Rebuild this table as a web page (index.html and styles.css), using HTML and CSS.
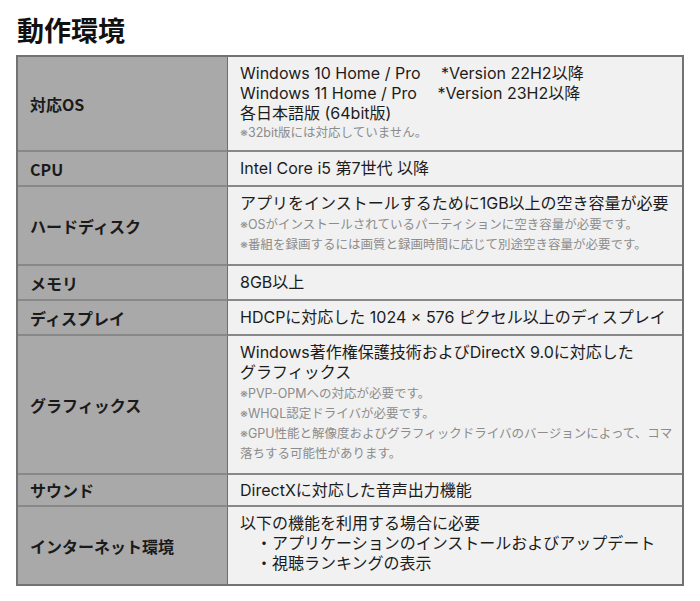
FILE: index.html
```html
<!DOCTYPE html>
<html lang="ja">
<head>
<meta charset="utf-8">
<title>動作環境</title>
<link rel="stylesheet" href="styles.css">
</head>
<body>
<h1 class="title">動作環境</h1>
<table class="spec">
  <tr>
    <th>対応OS</th>
    <td>
      <div>Windows 10 Home / Pro&ensp;&ensp; *Version 22H2以降</div>
      <div>Windows 11 Home / Pro&ensp;&ensp; *Version 23H2以降</div>
      <div>各日本語版 (64bit版)</div>
      <div class="note">※32bit版には対応していません。</div>
    </td>
  </tr>
  <tr>
    <th>CPU</th>
    <td>Intel Core i5 第7世代 以降</td>
  </tr>
  <tr>
    <th>ハードディスク</th>
    <td class="roomy">
      <div>アプリをインストールするために1GB以上の空き容量が必要</div>
      <div class="notes">
        <div class="note">※OSがインストールされているパーティションに空き容量が必要です。</div>
        <div class="note">※番組を録画するには画質と録画時間に応じて別途空き容量が必要です。</div>
      </div>
    </td>
  </tr>
  <tr>
    <th>メモリ</th>
    <td>8GB以上</td>
  </tr>
  <tr>
    <th>ディスプレイ</th>
    <td>HDCPに対応した 1024 × 576 ピクセル以上のディスプレイ</td>
  </tr>
  <tr>
    <th>グラフィックス</th>
    <td class="roomy">
      <div>Windows著作権保護技術およびDirectX 9.0に対応した<br>グラフィックス</div>
      <div class="notes">
        <div class="note">※PVP-OPMへの対応が必要です。</div>
        <div class="note">※WHQL認定ドライバが必要です。</div>
        <div class="note">※GPU性能と解像度およびグラフィックドライバのバージョンによって、コマ落ちする可能性があります。</div>
      </div>
    </td>
  </tr>
  <tr>
    <th>サウンド</th>
    <td class="tight">DirectXに対応した音声出力機能</td>
  </tr>
  <tr class="last">
    <th>インターネット環境</th>
    <td>
      <div>以下の機能を利用する場合に必要</div>
      <ul class="list">
        <li>・アプリケーションのインストールおよびアップデート</li>
        <li>・視聴ランキングの表示</li>
      </ul>
    </td>
  </tr>
</table>
</body>
</html>
```
FILE: styles.css
```css
html, body {
  margin: 0;
  padding: 0;
  background: #ffffff;
}

body {
  padding: 13px 16px 0;
  font-family: "Inter", "Noto Sans CJK JP", sans-serif;
  color: #1c1c1c;
}

.title {
  margin: 0 0 8px 1px;
  font-size: 27px;
  line-height: 34px;
  font-weight: 700;
  color: #111111;
  font-family: "Noto Sans CJK JP", sans-serif;
}

.spec {
  width: 668px;
  border-collapse: separate;
  border-spacing: 0;
  border: 2px solid #727272;
}

.spec th,
.spec td {
  border-bottom: 2px solid #888888;
  vertical-align: middle;
  text-align: left;
  font-size: 16px;
  line-height: 20px;
}

.spec .last th,
.spec .last td {
  border-bottom: 0;
}

.spec th {
  width: 197px;
  padding: 0 0 0 12px;
  background: #a9a9a9;
  font-weight: 700;
  font-family: "Noto Sans CJK JP", sans-serif;
  color: #1a1a1a;
  border-right: 1px solid #6e6e6e;
}

.spec td {
  padding: 6px 6px 7px 12px;
  background: #f1f1f1;
  font-weight: 400;
}

.spec td.roomy {
  padding-bottom: 9px;
}

.spec td.tight {
  padding-top: 5px;
  padding-bottom: 5px;
}

.notes {
  margin-top: 2px;
}

.note {
  font-size: 12.5px;
  line-height: 20px;
  color: #8c8c8c;
}

.list {
  list-style: none;
  margin: 0 0 4px;
  padding: 0 0 0 16px;
}
```
